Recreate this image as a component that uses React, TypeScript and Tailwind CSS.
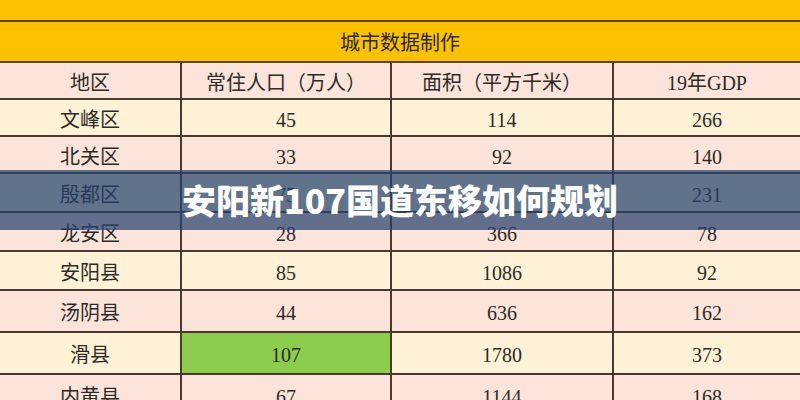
import React from "react";

const rows: { name: string; pop: string; area: string; gdp: string; bg: string; h: string; green?: boolean }[] = [
  { name: "文峰区", pop: "45", area: "114", gdp: "266", bg: "bg-[#fff2d6]", h: "h-[37px]" },
  { name: "北关区", pop: "33", area: "92", gdp: "140", bg: "bg-[#fde4da]", h: "h-[37px]" },
  { name: "殷都区", pop: "75", area: "", gdp: "231", bg: "bg-[#fff2d6]", h: "h-[39px]" },
  { name: "龙安区", pop: "28", area: "366", gdp: "78", bg: "bg-[#fde4da]", h: "h-[39px]" },
  { name: "安阳县", pop: "85", area: "1086", gdp: "92", bg: "bg-[#fff2d6]", h: "h-[39px]" },
  { name: "汤阴县", pop: "44", area: "636", gdp: "162", bg: "bg-[#fde4da]", h: "h-[42px]" },
  { name: "滑县", pop: "107", area: "1780", gdp: "373", bg: "bg-[#fff2d6]", h: "h-[42px]", green: true },
  { name: "内黄县", pop: "67", area: "1144", gdp: "168", bg: "bg-[#fde4da]", h: "h-[42px]" },
];

const font = { fontFamily: '"Liberation Serif", "Noto Sans CJK SC", serif' };

export default function App() {
  return (
    <div className="relative w-[800px] h-[400px] overflow-hidden bg-[#fde4da] text-[#2e2a26]" style={font}>
      <div className="h-[22px] bg-[#fdc103] border-b-2 border-[#5a4632]" />
      <div className="h-[41px] bg-[#fdc103] border-b-2 border-[#5a4632] flex items-center justify-center text-[20px] pt-[3px]">
        城市数据制作
      </div>
      <div className="grid grid-cols-[182px_210px_222px_186px] h-[37px] pt-[4px] bg-[#fde4da] border-b-2 border-[#4a3a2e] text-[20px]">
        <div className="flex items-center justify-center border-r-2 border-[#4a3a2e] -mt-[4px] pt-[4px]">地区</div>
        <div className="flex items-center justify-center border-r-2 border-[#4a3a2e] -mt-[4px] pt-[4px]">常住人口（万人）</div>
        <div className="flex items-center justify-center border-r-2 border-[#4a3a2e] -mt-[4px] pt-[4px]">面积（平方千米）</div>
        <div className="flex items-center justify-center -mt-[4px] pt-[4px]">19年GDP</div>
      </div>
      {rows.map((r) => (
        <div key={r.name} className={`grid grid-cols-[182px_210px_222px_186px] ${r.h} ${r.bg} border-b-2 border-[#4a3a2e] text-[20px]`}>
          <div className="flex items-center justify-center border-r-2 border-[#4a3a2e] pt-[4px]">{r.name}</div>
          <div className={`flex items-center justify-center border-r-2 border-[#4a3a2e] pt-[4px] ${r.green ? "bg-[#8ccd4e]" : ""}`}>{r.pop}</div>
          <div className="flex items-center justify-center border-r-2 border-[#4a3a2e] pt-[4px]">{r.area}</div>
          <div className="flex items-center justify-center pt-[4px]">{r.gdp}</div>
        </div>
      ))}
      <div className="absolute left-0 top-[170px] w-[800px] h-[60px] bg-[rgba(36,64,110,0.72)] flex items-center justify-center">
        <span
          className="text-white text-[34px] font-black leading-none"
          style={{ fontFamily: '"Noto Sans CJK SC", "Noto Sans", sans-serif' }}
        >
          安阳新107国道东移如何规划
        </span>
      </div>
    </div>
  );
}
